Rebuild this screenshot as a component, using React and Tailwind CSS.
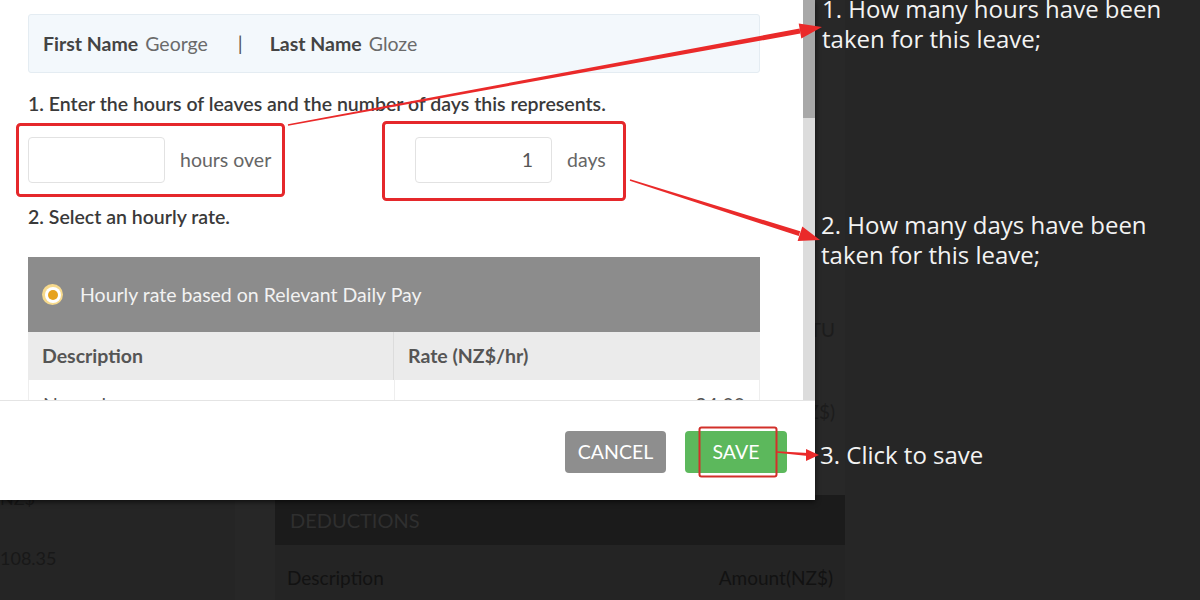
import React from "react";

function Arrows() {
  return (
    <svg className="absolute left-0 top-0 pointer-events-none" width="1200" height="600" viewBox="0 0 1200 600">
      <g fill="none" stroke="#e5282b">
        <rect x="17.5" y="124.5" width="266" height="71" rx="3" strokeWidth="3" />
        <rect x="383.5" y="122.5" width="241" height="77" rx="3" strokeWidth="3" />
        <rect x="699.5" y="427.5" width="77" height="49" rx="2" strokeWidth="2" stroke="#d2302a" />
      </g>
      <g fill="#ea2a2a">
        <polygon points="287.9,124.3 288.1,125.7 800.4,33.5 799.6,28.5" />
        <polygon points="822,27 798.7,23.6 801.3,38.4" />
        <polygon points="630.2,179.3 629.8,180.7 798.8,236.1 800.2,231.3" />
        <polygon points="820,240 802.3,226.6 797.6,241" />
        <polygon points="777,451.3 777,452.7 808,456 808,453" />
        <polygon points="819,455 806,449 806,461" />
      </g>
    </svg>
  );
}

function Background() {
  return (
    <div className="flex h-full w-full text-[#151515]" style={{ fontFamily: "Lato, 'Liberation Sans', sans-serif" }}>
      <div className="w-[235px] h-full bg-[#252525] flex flex-col">
        <div className="h-[488px]" />
        <div className="text-[18px] leading-[20px] text-[#181818]">NZ$</div>
        <div className="mt-[40px] text-[18px] leading-[20px] text-[#181818]">108.35</div>
      </div>
      <div className="w-[40px] h-full bg-[#272727]" />
      <div className="w-[570px] h-full bg-[#282828] flex flex-col">
        <div className="h-[495px] flex flex-col items-end pr-[10px]">
          <div className="mt-[318px] text-[19px] leading-[24px] text-[#1c1c1c]">STATU</div>
          <div className="mt-[58px] text-[19px] leading-[24px] text-[#1c1c1c]">Amount(NZ$)</div>
        </div>
        <div className="h-[50px] bg-[#1b1b1b] flex items-center px-[15px] text-[20px] text-[#2f2f2f]">DEDUCTIONS</div>
        <div className="flex-1 bg-[#242424] flex justify-between items-start px-[12px] pt-[22px] text-[19px] leading-[22px] text-[#121212]">
          <span>Description</span>
          <span>Amount(NZ$)</span>
        </div>
      </div>
      <div className="flex-1 h-full bg-[#262626]" />
    </div>
  );
}

function Modal() {
  return (
    <div
      className="absolute left-0 top-0 w-[815px] h-[500px] bg-white flex flex-col shadow-[0_2px_5px_rgba(0,0,0,0.6)]"
      style={{ fontFamily: "Lato, 'Liberation Sans', sans-serif" }}
    >
      <div className="h-[400px] flex overflow-hidden">
        <div className="flex-1 pl-[28px] pr-[43px] flex flex-col text-[#3e3e3e]">
          <div className="mt-[14px] h-[59px] shrink-0 flex items-center px-[14px] bg-[#f3f8fc] border border-[#e4ecf2] rounded-[3px] text-[19.5px]">
            <span className="font-bold text-[#444]">First Name</span>
            <span className="ml-[7px] text-[#6a6a6a]">George</span>
            <span className="ml-[30px] text-[#555]">|</span>
            <span className="ml-[27px] font-bold text-[#444]">Last Name</span>
            <span className="ml-[7px] text-[#6a6a6a]">Gloze</span>
          </div>
          <div className="mt-[20px] text-[19.5px] leading-[22px] font-semibold text-[#3a3a3a]">
            1. Enter the hours of leaves and the number of days this represents.
          </div>
          <div className="mt-[22px] flex items-center h-[46px] shrink-0">
            <div className="w-[387px] flex items-center">
              <div className="w-[137px] h-[46px] border border-[#e2e2e2] rounded-[4px] bg-white" />
              <span className="ml-[15px] text-[19.5px] text-[#666]">hours over</span>
            </div>
            <div className="w-[137px] h-[46px] border border-[#e2e2e2] rounded-[4px] bg-white flex items-center justify-end pr-[18px] text-[19.5px] text-[#555]">
              1
            </div>
            <span className="ml-[15px] text-[19.5px] text-[#666]">days</span>
          </div>
          <div className="mt-[23px] text-[19.5px] leading-[22px] font-semibold text-[#3a3a3a]">2. Select an hourly rate.</div>
          <div className="mt-[29px] shrink-0 h-[75px] bg-[#8c8c8c] flex items-center pl-[14px] text-[19.5px] text-[#f2f2f2]">
            <span className="w-[21px] h-[21px] rounded-full bg-[#f6d98c] flex items-center justify-center">
              <span className="w-[16px] h-[16px] rounded-full bg-white flex items-center justify-center">
                <span className="w-[10px] h-[10px] rounded-full bg-[#e6a21e]" />
              </span>
            </span>
            <span className="ml-[17px]">Hourly rate based on Relevant Daily Pay</span>
          </div>
          <div className="shrink-0 h-[48px] bg-[#ebebeb] flex text-[19.5px] font-bold text-[#555]">
            <div className="w-[366px] h-full flex items-center px-[14px] border-r border-[#dcdcdc]">Description</div>
            <div className="flex-1 h-full flex items-center px-[14px]">Rate (NZ$/hr)</div>
          </div>
          <div className="shrink-0 h-[48px] flex text-[19.5px] text-[#555] border-x border-[#eeeeee]">
            <div className="w-[366px] h-full flex items-start pt-[10px] px-[14px] border-r border-[#eeeeee]">Normal</div>
            <div className="flex-1 h-full flex items-start justify-end pt-[10px] px-[14px]">24.00</div>
          </div>
        </div>
        <div className="w-[12px] h-full flex flex-col bg-[#dcdcdc]">
          <div className="h-[118px] bg-[#a8a8a8]" />
        </div>
      </div>
      <div className="flex-1 border-t border-[#e4e4e4] flex items-start justify-end pr-[28px] pt-[30px] gap-[19px]">
        <button className="w-[101px] h-[42px] rounded-[4px] bg-[#8e8e8e] text-white text-[19.5px]">CANCEL</button>
        <button className="w-[102px] h-[42px] rounded-[4px] bg-[#5cb85c] text-white text-[19.5px]">SAVE</button>
      </div>
    </div>
  );
}

function Notes() {
  const f = { fontFamily: "'Open Sans', 'Noto Sans', sans-serif" };
  return (
    <>
      <div className="absolute left-[822px] top-[-6px] text-[24px] leading-[30px] text-[#f3f3f3]" style={f}>
        1. How many hours have been
        <br />
        taken for this leave;
      </div>
      <div className="absolute left-[821px] top-[210px] text-[24px] leading-[30px] text-[#f3f3f3]" style={f}>
        2. How many days have been
        <br />
        taken for this leave;
      </div>
      <div className="absolute left-[820px] top-[440px] text-[24px] leading-[30px] text-[#f3f3f3]" style={f}>
        3. Click to save
      </div>
    </>
  );
}

export default function App() {
  return (
    <div className="relative w-[1200px] h-[600px] overflow-hidden bg-[#262626]">
      <Background />
      <Modal />
      <Notes />
      <Arrows />
    </div>
  );
}
